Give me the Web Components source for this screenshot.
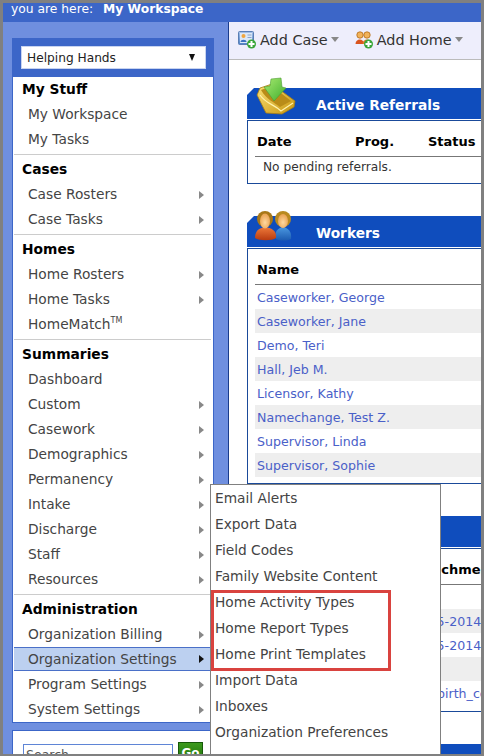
<!DOCTYPE html>
<html>
<head>
<meta charset="utf-8">
<title>My Workspace</title>
<style>
    html, body { margin: 0; padding: 0; background: #808080; }
    body { font-family: "DejaVu Sans", Verdana, sans-serif; font-size: 13px; }
</style>
</head>
<body>

<app-shell>
    <span slot="here">My Workspace</span>
    <side-nav slot="side" org="Helping Hands">
        <nav-section title="My Stuff">
            <nav-item>My Workspace</nav-item>
            <nav-item>My Tasks</nav-item>
        </nav-section>
        <nav-section title="Cases">
            <nav-item more>Case Rosters</nav-item>
            <nav-item more>Case Tasks</nav-item>
        </nav-section>
        <nav-section title="Homes">
            <nav-item more>Home Rosters</nav-item>
            <nav-item more>Home Tasks</nav-item>
            <nav-item>HomeMatch<sup style="font-size:8px;line-height:0">TM</sup></nav-item>
        </nav-section>
        <nav-section title="Summaries">
            <nav-item>Dashboard</nav-item>
            <nav-item more>Custom</nav-item>
            <nav-item more>Casework</nav-item>
            <nav-item more>Demographics</nav-item>
            <nav-item more>Permanency</nav-item>
            <nav-item more>Intake</nav-item>
            <nav-item more>Discharge</nav-item>
            <nav-item more>Staff</nav-item>
            <nav-item more>Resources</nav-item>
        </nav-section>
        <nav-section title="Administration" last>
            <nav-item more>Organization Billing</nav-item>
            <nav-item more selected>Organization Settings</nav-item>
            <nav-item more>Program Settings</nav-item>
            <nav-item more>System Settings</nav-item>
        </nav-section>
    </side-nav>

    <tool-bar>
        <tool-button icon="case">Add Case</tool-button>
        <tool-button icon="home">Add Home</tool-button>
        <app-icon name="shield" style="margin-left:7px"></app-icon>
    </tool-bar>

    <data-panel title="Active Referrals" icon="tray" columns="98px 73px 1fr" pad="5">
        <span slot="head">Date</span>
        <span slot="head">Prog.</span>
        <span slot="head">Status</span>
        <div style="height:21px;line-height:21px;padding-left:8px;color:#333;font-size:12.2px">No pending referrals.</div>
    </data-panel>

    <data-panel title="Workers" icon="people" columns="1fr">
        <span slot="head">Name</span>
        <data-row link>Caseworker, George</data-row>
        <data-row link shade>Caseworker, Jane</data-row>
        <data-row link>Demo, Teri</data-row>
        <data-row link shade>Hall, Jeb M.</data-row>
        <data-row link>Licensor, Kathy</data-row>
        <data-row link shade>Namechange, Test Z.</data-row>
        <data-row link>Supervisor, Linda</data-row>
        <data-row link shade>Supervisor, Sophie</data-row>
    </data-panel>

    <data-panel columns="1fr">
        <span slot="head" style="padding-left:153px">Attachment</span>
        <data-row></data-row>
        <data-row link shade offset="151">05-05-2014</data-row>
        <data-row link offset="151">05-05-2014</data-row>
        <data-row shade></data-row>
        <data-row link offset="180">birth_certificate</data-row>
    </data-panel>

    <data-panel columns="1fr"></data-panel>

    <fly-menu slot="over">
        <fly-item>Email Alerts</fly-item>
        <fly-item>Export Data</fly-item>
        <fly-item>Field Codes</fly-item>
        <fly-item>Family Website Content</fly-item>
        <fly-item>Home Activity Types</fly-item>
        <fly-item>Home Report Types</fly-item>
        <fly-item>Home Print Templates</fly-item>
        <fly-item>Import Data</fly-item>
        <fly-item>Inboxes</fly-item>
        <fly-item>Organization Preferences</fly-item>
    </fly-menu>
</app-shell>

<script>
const ICONS = {
    case: `<svg width="19" height="19" viewBox="0 0 19 19">
        <defs><linearGradient id="c" x1="0" y1="0" x2="0" y2="1"><stop offset="0" stop-color="#a9c4ea"/><stop offset="1" stop-color="#4f82c8"/></linearGradient></defs>
        <rect x="0.5" y="1.5" width="15" height="13" rx="1" fill="url(#c)" stroke="#5a7fb5"/>
        <rect x="2" y="3" width="12" height="10" fill="#dbe8f8"/>
        <circle cx="5.5" cy="6" r="2" fill="#f0a640"/>
        <path d="M2.500 12 C2.500 9 8.500 9 8.500 12 Z" fill="#3b72c0"/>
        <path d="M9.500 5h4M9.500 7.500h4" stroke="#8aa6cc"/>
        <circle cx="13.500" cy="14" r="4.500" fill="#3aa63a"/>
        <path d="M13.500 11v6M10.500 14h6" stroke="#fff" stroke-width="2"/>
    </svg>`,
    home: `<svg width="19" height="19" viewBox="0 0 19 19">
        <circle cx="5" cy="5" r="3.200" fill="#f2b35a" stroke="#b26a18" stroke-width=".8"/>
        <path d="M0.500 14 C0.500 8 9 8 9 14 Z" fill="#d9541e"/>
        <circle cx="12" cy="5" r="3.200" fill="#f2b35a" stroke="#b26a18" stroke-width=".8"/>
        <path d="M7.500 14 C7.500 8 16.500 8 16.500 14 Z" fill="#e07a28"/>
        <circle cx="13.500" cy="14" r="4.500" fill="#3aa63a"/>
        <path d="M13.500 11v6M10.500 14h6" stroke="#fff" stroke-width="2"/>
    </svg>`,
    shield: `<svg width="14" height="15" viewBox="0 0 14 15">
        <path d="M0.500 1.500h13v7c0 3-3 5-6.500 6-3.500-1-6.500-3-6.500-6z" fill="#c5d2e6" stroke="#9db0cc"/>
    </svg>`,
    tray: `<svg width="42" height="40" viewBox="0 0 42 40">
        <defs>
            <linearGradient id="t" x1="0" y1="0" x2="1" y2="1"><stop offset="0" stop-color="#fbe27a"/><stop offset="1" stop-color="#c8960e"/></linearGradient>
            <linearGradient id="g" x1="0" y1="0" x2="1" y2="1"><stop offset="0" stop-color="#a8ea70"/><stop offset="1" stop-color="#3fae2e"/></linearGradient>
        </defs>
        <path d="M3 19 L6 12 L18 8 L41 25 L40 31 L28 38 L12 37 Z" fill="url(#t)" stroke="#a97e10" stroke-width=".8"/>
        <path d="M7 14 L18 10 L37 25 L26 31 C20 26 13 24 7 14 Z" fill="#b98c18"/>
        <path d="M6 19 C12 28 20 28 27 35 L39 27" fill="none" stroke="#fff3b0" stroke-width="1.200"/>
        <path d="M17 3 L27 2 L28 11 L32 12 L20 25 L10 11 L16 10 Z" fill="url(#g)" stroke="#4e9c32" stroke-width=".6"/>
    </svg>`,
    people: `<svg width="42" height="31" viewBox="0 0 42 31">
        <defs>
            <radialGradient id="f" cx=".5" cy=".6" r=".6"><stop offset="0" stop-color="#ffd9a0"/><stop offset="1" stop-color="#e8a050"/></radialGradient>
            <linearGradient id="r" x1="0" y1="0" x2="0" y2="1"><stop offset="0" stop-color="#ee7a3a"/><stop offset="1" stop-color="#b83a10"/></linearGradient>
            <linearGradient id="b" x1="0" y1="0" x2="0" y2="1"><stop offset="0" stop-color="#4a98e0"/><stop offset="1" stop-color="#1c5ab0"/></linearGradient>
        </defs>
        <path d="M22 28 C20 20 24 17 29 16 C34 17 38 20 37 28 C33 30 26 30 22 28 Z" fill="url(#b)"/>
        <ellipse cx="29" cy="8" rx="8" ry="8" fill="#b98a20"/>
        <ellipse cx="29" cy="10" rx="5" ry="7" fill="url(#f)"/>
        <path d="M1 27 C1 18 7 17 11 16 C17 17 23 19 22 27 C18 30 5 30 1 27 Z" fill="url(#r)"/>
        <ellipse cx="11" cy="8" rx="8" ry="8" fill="#a87818"/>
        <ellipse cx="11" cy="10" rx="5" ry="7.500" fill="url(#f)"/>
    </svg>`
};

class AppIcon extends HTMLElement {
    constructor() {
        super();
        this.attachShadow({ mode: 'open' });
    }

    connectedCallback() {
        this.shadowRoot.innerHTML = `
            <style>
                :host { display: inline-flex; flex: none; }
                svg { display: block; }
            </style>
            ${ICONS[this.getAttribute('name')] || ''}
        `;
    }
}

class AppShell extends HTMLElement {
    constructor() {
        super();
        this.attachShadow({ mode: 'open' });
        this.shadowRoot.innerHTML = `
            <style>
                :host {
                    display: block;
                    box-sizing: border-box;
                    width: 484px;
                    height: 756px;
                    padding: 3px 3px 2px 3px;
                    background: #808080;
                }
                .frame {
                    position: relative;
                    height: 100%;
                    overflow: hidden;
                    display: grid;
                    grid-template-rows: 19px 1fr;
                    grid-template-columns: 225px 1fr;
                }
                .here {
                    grid-column: 1 / 3;
                    background: #3c66c8;
                    color: #fff;
                    padding-left: 8px;
                    line-height: 12px;
                    white-space: nowrap;
                    font-size: 12.3px;
                }
                .here b { margin-left: 6px; }
                .side {
                    background: #6f8fdf;
                    padding: 16px 0 0 9px;
                    overflow: hidden;
                }
                .main {
                    background: #fff;
                    border-left: 1px solid #1a3c8c;
                    overflow: hidden;
                }
            </style>
            <div class="frame">
                <div class="here">you are here: <b><slot name="here"></slot></b></div>
                <div class="side"><slot name="side"></slot></div>
                <div class="main"><slot></slot></div>
                <slot name="over"></slot>
            </div>
        `;
    }
}

class SideNav extends HTMLElement {
    constructor() {
        super();
        this.attachShadow({ mode: 'open' });
    }

    connectedCallback() {
        this.shadowRoot.innerHTML = `
            <style>
                :host { display: block; width: 202px; }
                .org {
                    background: #3c66c8;
                    height: 39px;
                    padding: 8px 8px 0 9px;
                    box-sizing: border-box;
                }
                .pick {
                    box-sizing: border-box;
                    height: 23px;
                    background: #fff;
                    border: 1px solid #c8d4f0;
                    display: flex;
                    justify-content: space-between;
                    align-items: center;
                    padding: 0 10px 0 5px;
                    font-size: 12.2px;
                    color: #222;
                }
                .arrow {
                    width: 0;
                    height: 0;
                    border-top: 7px solid #111;
                    border-left: 3.500px solid transparent;
                    border-right: 3.500px solid transparent;
                }
                .menu {
                    background: #fff;
                    border: 1px solid #3c66c8;
                    border-width: 0 1px 1px 1px;
                    height: 646px;
                    box-sizing: border-box;
                }
                .search {
                    margin-top: 7px;
                    background: #fff;
                    border: 1px solid #3c66c8;
                    border-bottom: 0;
                    height: 40px;
                    padding: 13px 0 0 10px;
                    box-sizing: border-box;
                    display: flex;
                    gap: 5px;
                    align-items: flex-start;
                }
                .box {
                    box-sizing: border-box;
                    width: 150px;
                    height: 22px;
                    border: 1px solid #5f85d6;
                    color: #555;
                    font-size: 12.5px;
                    line-height: 19px;
                    padding-left: 2px;
                }
                .go {
                    box-sizing: border-box;
                    width: 25px;
                    height: 22px;
                    margin-top: -2px;
                    background: linear-gradient(#3c9a1e, #1d6e0a);
                    border: 1px solid #16590a;
                    color: #fff;
                    font-size: 12px;
                    font-weight: bold;
                    text-align: center;
                    line-height: 20px;
                }
            </style>
            <div class="org">
                <div class="pick"><span>${this.getAttribute('org')}</span><span class="arrow"></span></div>
            </div>
            <div class="menu"><slot></slot></div>
            <div class="search">
                <div class="box">Search</div>
                <div class="go">Go</div>
            </div>
        `;
    }
}

class NavSection extends HTMLElement {
    constructor() {
        super();
        this.attachShadow({ mode: 'open' });
    }

    connectedCallback() {
        const first = !this.previousElementSibling;
        const last = this.hasAttribute('last');
        this.shadowRoot.innerHTML = `
            <style>
                :host {
                    display: block;
                    margin: 0 2px 0 1px;
                    padding: ${first ? 0 : 2}px 0 ${last ? 0 : 2}px 0;
                    border-bottom: ${last ? 0 : 1}px solid #ccc;
                }
                h3 {
                    margin: 0;
                    height: 25px;
                    line-height: 25px;
                    padding-left: 8px;
                    font-size: 13.8px;
                    font-weight: bold;
                    color: #000;
                }
            </style>
            <h3>${this.getAttribute('title')}</h3>
            <slot></slot>
        `;
    }
}

class NavItem extends HTMLElement {
    constructor() {
        super();
        this.attachShadow({ mode: 'open' });
    }

    connectedCallback() {
        const selected = this.hasAttribute('selected');
        this.shadowRoot.innerHTML = `
            <style>
                :host {
                    display: flex;
                    align-items: center;
                    justify-content: space-between;
                    box-sizing: border-box;
                    height: ${selected ? 24 : 25}px;
                    margin-bottom: ${selected ? 1 : 0}px;
                    padding: 0 7px 0 14px;
                    color: #444;
                    font-size: 13.75px;
                    white-space: nowrap;
                    ${selected ? 'background:#bcd0f0;border:solid #4a70c8;border-width:1px 0;' : ''}
                }
                span { position: relative; top: ${selected ? 0 : -1}px; }
                i {
                    display: ${this.hasAttribute('more') ? 'block' : 'none'};
                    width: 0;
                    height: 0;
                    border-left: 5px solid ${selected ? '#111' : '#888'};
                    border-top: 4.500px solid transparent;
                    border-bottom: 4.500px solid transparent;
                }
            </style>
            <span><slot></slot></span><i></i>
        `;
    }
}

class ToolBar extends HTMLElement {
    constructor() {
        super();
        this.attachShadow({ mode: 'open' });
        this.shadowRoot.innerHTML = `
            <style>
                :host {
                    display: flex;
                    align-items: center;
                    box-sizing: border-box;
                    height: 38px;
                    padding: 0 0 2px 9px;
                    gap: 16px;
                    background: #eeeefc;
                    border-bottom: 1px solid #bbb;
                    white-space: nowrap;
                    overflow: hidden;
                }
            </style>
            <slot></slot>
        `;
    }
}

class ToolButton extends HTMLElement {
    constructor() {
        super();
        this.attachShadow({ mode: 'open' });
    }

    connectedCallback() {
        this.shadowRoot.innerHTML = `
            <style>
                :host {
                    display: inline-flex;
                    align-items: center;
                    flex: none;
                    gap: 3px;
                    color: #333;
                    font-size: 14.4px;
                }
                i {
                    width: 0;
                    height: 0;
                    border-top: 5px solid #888;
                    border-left: 4px solid transparent;
                    border-right: 4px solid transparent;
                }
            </style>
            <app-icon name="${this.getAttribute('icon')}"></app-icon>
            <span><slot></slot></span><i></i>
        `;
    }
}

class DataPanel extends HTMLElement {
    constructor() {
        super();
        this.attachShadow({ mode: 'open' });
    }

    connectedCallback() {
        const icon = this.getAttribute('icon');
        const pad = this.getAttribute('pad') || 6;
        this.shadowRoot.innerHTML = `
            <style>
                :host {
                    display: block;
                    position: relative;
                    margin: 28px 0 32px 18px;
                }
                :host(:not(:first-of-type)) { margin-top: 0; }
                .bar {
                    height: 31px;
                    margin-bottom: 1px;
                    background: #0f4dbd;
                    clip-path: polygon(7px 0, 100% 0, 100% 100%, 0 100%, 0 7px);
                    color: #fff;
                    font-size: 13.75px;
                    font-weight: bold;
                    line-height: 35px;
                    padding-left: 69px;
                }
                .icon { position: absolute; left: 7px; top: ${icon === 'tray' ? -12 : -5}px; }
                .body {
                    border: 1px solid #1a4a9a;
                    border-right: 0;
                    padding: 0 0 ${pad}px 7px;
                }
                .head {
                    display: grid;
                    grid-template-columns: ${this.getAttribute('columns')};
                    box-sizing: content-box;
                    height: 35px;
                    line-height: 41px;
                    border-bottom: 1px solid #777;
                    color: #000;
                    font-weight: bold;
                    font-size: 13px;
                    padding-left: 2px;
                    white-space: nowrap;
                }
            </style>
            <div class="bar">${this.getAttribute('title') || ''}</div>
            ${icon ? `<app-icon class="icon" name="${icon}"></app-icon>` : ''}
            <div class="body">
                <div class="head"><slot name="head"></slot></div>
                <slot></slot>
            </div>
        `;
    }
}

class DataRow extends HTMLElement {
    constructor() {
        super();
        this.attachShadow({ mode: 'open' });
    }

    connectedCallback() {
        this.shadowRoot.innerHTML = `
            <style>
                :host {
                    display: block;
                    height: 24px;
                    line-height: 26px;
                    padding-left: ${2 + Number(this.getAttribute('offset') || 0)}px;
                    white-space: nowrap;
                    overflow: hidden;
                    font-size: 12.6px;
                    color: ${this.hasAttribute('link') ? '#4a60c8' : '#333'};
                    background: ${this.hasAttribute('shade') ? '#eeeeee' : 'transparent'};
                }
            </style>
            <slot></slot>
        `;
    }
}

class FlyMenu extends HTMLElement {
    constructor() {
        super();
        this.attachShadow({ mode: 'open' });
        this.shadowRoot.innerHTML = `
            <style>
                :host {
                    display: block;
                    position: absolute;
                    left: 207px;
                    top: 481px;
                    width: 231px;
                    box-sizing: border-box;
                    height: 290px;
                    background: #fff;
                    border: 1px solid #808080;
                    z-index: 5;
                }
                .mark {
                    position: absolute;
                    left: 0;
                    top: 105px;
                    width: 174px;
                    height: 75px;
                    border: 3px solid #d9433f;
                }
            </style>
            <slot></slot>
            <div class="mark"></div>
        `;
    }
}

class FlyItem extends HTMLElement {
    constructor() {
        super();
        this.attachShadow({ mode: 'open' });
        this.shadowRoot.innerHTML = `
            <style>
                :host {
                    display: block;
                    height: 26px;
                    line-height: 26px;
                    padding-left: 4px;
                    color: #444;
                    font-size: 13.75px;
                    white-space: nowrap;
                }
            </style>
            <slot></slot>
        `;
    }
}

customElements.define('app-icon', AppIcon);
customElements.define('app-shell', AppShell);
customElements.define('side-nav', SideNav);
customElements.define('nav-section', NavSection);
customElements.define('nav-item', NavItem);
customElements.define('tool-bar', ToolBar);
customElements.define('tool-button', ToolButton);
customElements.define('data-panel', DataPanel);
customElements.define('data-row', DataRow);
customElements.define('fly-menu', FlyMenu);
customElements.define('fly-item', FlyItem);
</script>
</body>
</html>
